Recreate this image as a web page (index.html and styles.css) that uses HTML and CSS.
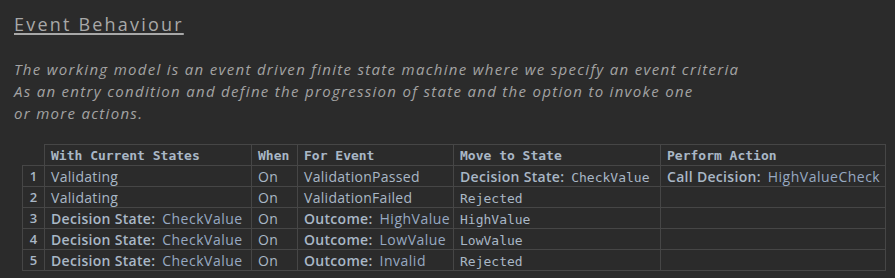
FILE: index.html
```html
<!DOCTYPE html>
<html>
<head>
<meta charset="utf-8">
<link rel="stylesheet" href="styles.css">
</head>
<body>
<h1 class="title">Event Behaviour</h1>
<p class="intro">The working model is an event driven finite state machine where we specify an event criteria<br>As an entry condition and define the progression of state and the option to invoke one<br>or more actions.</p>
<table class="grid">
  <colgroup>
    <col class="c-num"><col class="c-state"><col class="c-when"><col class="c-event"><col class="c-move"><col class="c-action">
  </colgroup>
  <thead>
    <tr>
      <th class="corner"></th>
      <th>With Current States</th>
      <th>When</th>
      <th>For Event</th>
      <th>Move to State</th>
      <th>Perform Action</th>
    </tr>
  </thead>
  <tbody>
    <tr>
      <td class="num">1</td>
      <td>Validating</td>
      <td>On</td>
      <td>ValidationPassed</td>
      <td><b class="key">Decision State:</b> <span class="mono">CheckValue</span></td>
      <td><b class="key">Call Decision:</b> <span class="val">HighValueCheck</span></td>
    </tr>
    <tr>
      <td class="num">2</td>
      <td>Validating</td>
      <td>On</td>
      <td>ValidationFailed</td>
      <td><span class="mono">Rejected</span></td>
      <td></td>
    </tr>
    <tr>
      <td class="num">3</td>
      <td><b class="key">Decision State:</b> <span class="val">CheckValue</span></td>
      <td>On</td>
      <td><b class="key">Outcome:</b> <span class="val">HighValue</span></td>
      <td><span class="mono">HighValue</span></td>
      <td></td>
    </tr>
    <tr>
      <td class="num">4</td>
      <td><b class="key">Decision State:</b> <span class="val">CheckValue</span></td>
      <td>On</td>
      <td><b class="key">Outcome:</b> <span class="val">LowValue</span></td>
      <td><span class="mono">LowValue</span></td>
      <td></td>
    </tr>
    <tr>
      <td class="num">5</td>
      <td><b class="key">Decision State:</b> <span class="val">CheckValue</span></td>
      <td>On</td>
      <td><b class="key">Outcome:</b> <span class="val">Invalid</span></td>
      <td><span class="mono">Rejected</span></td>
      <td></td>
    </tr>
  </tbody>
</table>
</body>
</html>
```

FILE: styles.css
```css
html, body {
  background: #2b2b2b;
}
body {
  margin: 0;
  padding: 12px 14px 0 14px;
  font-family: "Open Sans", "DejaVu Sans", sans-serif;
  color: #a9b7c6;
}
.title {
  margin: 0;
  font-family: "Open Sans", sans-serif;
  font-weight: 500;
  font-size: 18px;
  line-height: 24px;
  letter-spacing: 2.2px;
  color: #a8a8a8;
  text-decoration: underline;
  text-decoration-thickness: 2px;
  text-underline-offset: 2px;
  display: inline-block;
}
.intro {
  margin: 22px 0 0 0;
  font-family: "Open Sans", sans-serif;
  font-style: italic;
  font-size: 15px;
  line-height: 22px;
  letter-spacing: 1.3px;
  color: #a3a3a3;
}
.grid {
  margin: 20px 0 0 8px;
  border-collapse: collapse;
  table-layout: fixed;
  width: 863px;
}
.c-num { width: 22px; }
.c-state { width: 207px; }
.c-when { width: 46px; }
.c-event { width: 156px; }
.c-move { width: 207px; }
.c-action { width: 225px; }
.grid th, .grid td {
  border: 1px solid #464646;
  height: 20px;
  padding: 0 6px;
  text-align: left;
  white-space: nowrap;
  overflow: hidden;
  vertical-align: middle;
}
.grid th {
  font-family: "DejaVu Sans Mono", monospace;
  font-weight: 700;
  font-size: 13px;
  color: #a9b7c6;
}
.grid th.corner {
  border-top: none;
  border-left: none;
}
.grid td {
  font-size: 14px;
  letter-spacing: 0.3px;
  color: #a9b7c6;
}
.grid td.num {
  text-align: center;
  padding: 0;
  font-weight: 600;
  font-size: 13px;
}
.key {
  font-weight: 600;
  letter-spacing: 0.3px;
  margin-right: 3px;
}
.val {
  color: #97a9c2;
  letter-spacing: 0.5px;
}
.mono {
  font-family: "DejaVu Sans Mono", monospace;
  font-size: 13px;
  letter-spacing: 0;
  color: #a9b7c6;
}
```
